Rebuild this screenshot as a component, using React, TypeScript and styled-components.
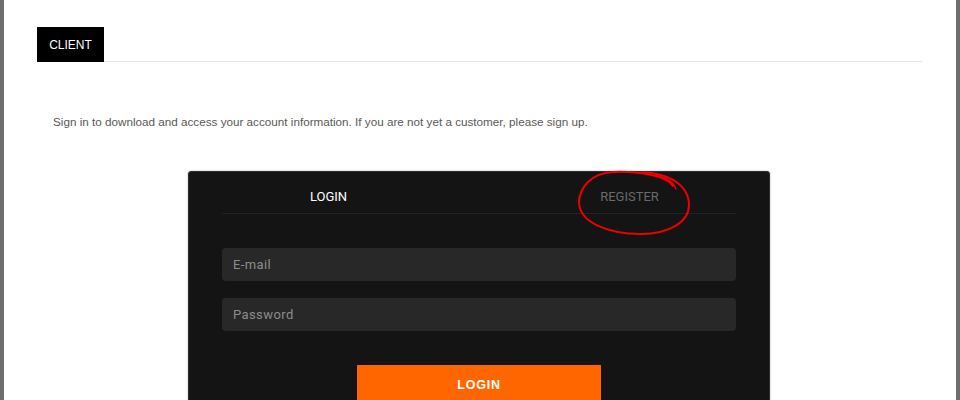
import React from 'react';
import styled, { createGlobalStyle } from 'styled-components';

const GlobalStyle = createGlobalStyle`
  html, body {
    margin: 0;
    padding: 0;
    background: #ffffff;
  }
`;

const Frame = styled.div`
  box-sizing: border-box;
  width: 960px;
  height: 400px;
  overflow: hidden;
  background: #ffffff;
  border-left: 4px solid #6e6e6e;
  border-right: 4px solid #6e6e6e;
  padding: 27px 34px 0 33px;
`;

const ClientBar = styled.div`
  display: flex;
  border-bottom: 1px solid #e4e4e4;
`;

const ClientTab = styled.div`
  width: 67px;
  height: 35px;
  margin-bottom: -1px;
  background: #000000;
  color: #ffffff;
  font-family: 'Liberation Sans', Arial, sans-serif;
  font-size: 12px;
  display: flex;
  align-items: center;
  justify-content: center;
`;

const Intro = styled.p`
  margin: 52px 0 0 16px;
  font-family: 'Liberation Sans', Arial, sans-serif;
  font-size: 11.7px;
  line-height: 16px;
  color: #595959;
`;

const Panel = styled.div`
  position: relative;
  box-sizing: border-box;
  width: 582px;
  height: 260px;
  margin: 41px 0 0 151px;
  padding: 0 33px;
  background: #141414;
  border: 1px solid #2e2e2e;
  border-radius: 3px;
  box-shadow: 0 0 2px rgba(0, 0, 0, 0.35);
  font-family: Roboto, 'Noto Sans', sans-serif;
`;

const TabNav = styled.div`
  border-bottom: 1px solid #222222;
`;

const TabRow = styled.div`
  display: grid;
  grid-template-columns: 1fr 1fr;
  margin: 0 -44px;
`;

const Tab = styled.div<{ $active?: boolean }>`
  text-align: center;
  padding: 17px 0 8px;
  font-size: 13px;
  line-height: 16px;
  font-weight: 400;
  color: ${(p) => (p.$active ? '#ffffff' : '#6a6a6a')};
`;

const Form = styled.div`
  display: flex;
  flex-direction: column;
  gap: 17px;
  padding-top: 34px;
`;

const Field = styled.input`
  box-sizing: border-box;
  width: 100%;
  height: 33px;
  padding: 0 11px;
  border: none;
  outline: none;
  border-radius: 4px;
  background: #282828;
  color: #dddddd;
  font-family: Roboto, 'Noto Sans', sans-serif;
  font-size: 13px;
  letter-spacing: 0.4px;

  &::placeholder {
    color: #8c8c8c;
  }
`;

const SubmitButton = styled.button`
  align-self: center;
  width: 244px;
  height: 40px;
  margin-top: 17px;
  border: none;
  background: #ff6600;
  color: #ffffff;
  font-family: 'Liberation Sans', Arial, sans-serif;
  font-size: 12.5px;
  font-weight: 700;
  letter-spacing: 0.8px;
`;

const Scribble = styled.svg`
  position: absolute;
  left: 0;
  top: 0;
  width: 582px;
  height: 80px;
  pointer-events: none;
  overflow: visible;
`;

const App = () => {
  return (
    <>
      <GlobalStyle />
      <Frame>
        <ClientBar>
          <ClientTab>CLIENT</ClientTab>
        </ClientBar>
        <Intro>
          Sign in to download and access your account information. If you are not yet a customer, please sign up.
        </Intro>
        <Panel>
          <TabNav>
            <TabRow>
              <Tab $active>LOGIN</Tab>
              <Tab>REGISTER</Tab>
            </TabRow>
          </TabNav>
          <Form>
            <Field placeholder="E-mail" />
            <Field type="password" placeholder="Password" />
            <SubmitButton>LOGIN</SubmitButton>
          </Form>
          <Scribble viewBox="0 0 582 80">
            <path
              d="M484,14 C478,4 450,-1 424,0 C402,1 390,16 390,31 C391,50 418,62 452,62 C480,62 500,50 500,33 C500,19 490,8 472,3 C464,1 456,0 448,1"
              fill="none"
              stroke="#ee0000"
              strokeWidth="2"
              strokeLinecap="round"
            />
            <path
              d="M487,17 C484,9 476,5 466,3"
              fill="none"
              stroke="#ee0000"
              strokeWidth="1.4"
              strokeLinecap="round"
            />
          </Scribble>
        </Panel>
      </Frame>
    </>
  );
};

export default App;
